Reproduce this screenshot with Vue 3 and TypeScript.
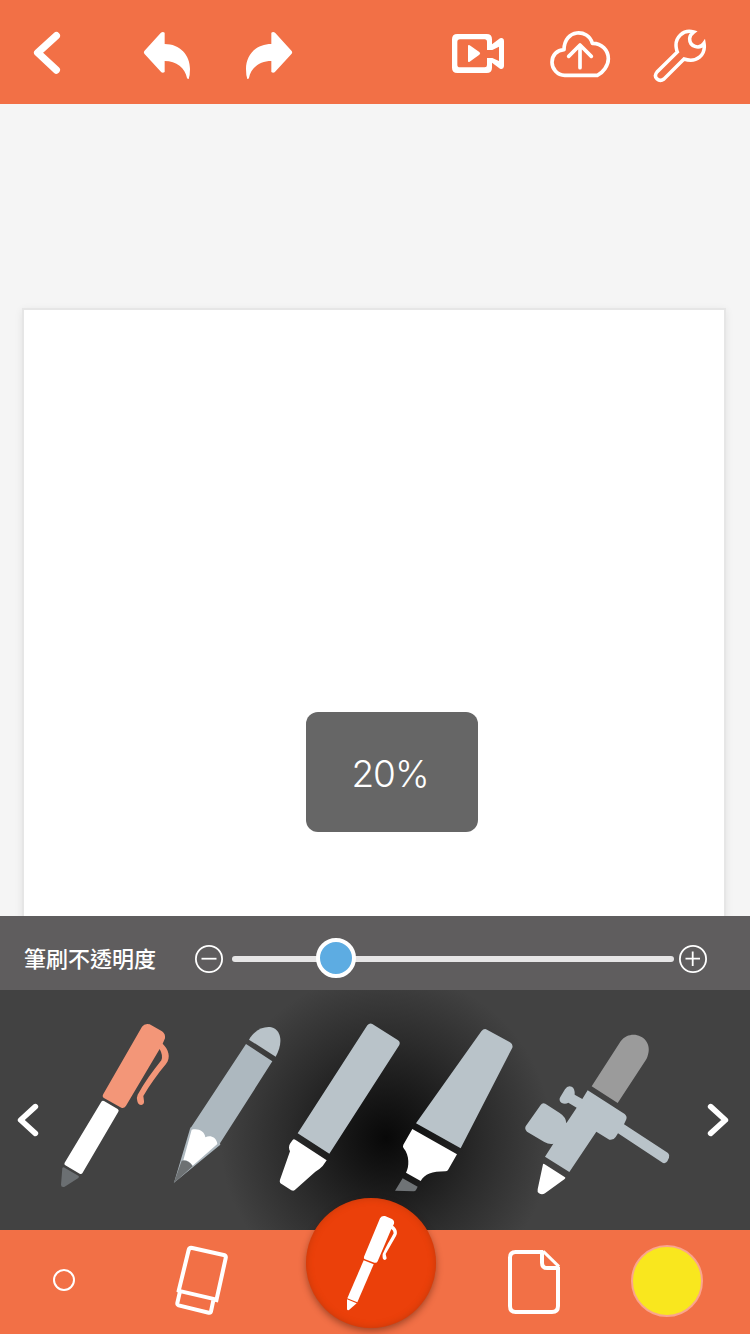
<script setup lang="ts">
import { computed, ref } from 'vue'

const opacity = ref(20)
const thumbLeft = computed(() => `${((opacity.value + 3.53) / 100) * 442}px`)
const brushColor = ref('#f9e71e')
</script>

<template>
  <div class="app">
    <header class="bar top">
      <svg class="icon back" viewBox="90 0 102 312">
        <path d="M169 107L113 158L169 210" fill="none" stroke="#fff" stroke-width="22" stroke-linecap="round" stroke-linejoin="round" />
      </svg>
      <svg class="icon undo" viewBox="420 0 162 312">
        <path d="M433 153L482 99Q488 94 494 98V132C540 132 570 165 570 207Q570 226 566 237Q563 238 561 234C556 204 529 183 494 183V216Q489 220 484 217L433 161Q430 157 433 153Z" fill="#fff" />
      </svg>
      <svg class="icon redo" viewBox="726 0 162 312">
        <path d="M875 153L826 99Q820 94 814 98V132C768 132 738 165 738 207Q738 226 742 237Q745 238 747 234C752 204 779 183 814 183V216Q819 220 824 217L875 161Q878 157 875 153Z" fill="#fff" />
      </svg>
      <svg class="icon video" viewBox="90 0 168 312">
        <path fill-rule="evenodd" fill="#fff" d="M112 102H200Q216 102 216 118V133L240 115Q251 112 252 123V199Q251 209 240 206L216 188V203Q216 219 200 219H112Q96 219 96 203V118Q96 102 112 102ZM120 118Q112 118 112 126V195Q112 202 120 202H194Q201 202 201 195V174H217L237 183V140L217 150H201V126Q201 118 194 118Z" />
        <path d="M144 138Q144 133 149 136L178 156Q183 160 178 164L149 185Q144 188 144 183Z" fill="#fff" />
      </svg>
      <svg class="icon cloud" viewBox="384 0 192 312">
        <g fill="none" stroke="#fff" stroke-width="11" stroke-linejoin="round" stroke-linecap="round">
          <path d="M432 149C433 86 505 85 517 130C544 129 565 150 565 176C565 197 549 218 532 226H434C412 226 396 207 396 187C396 165 411 150 432 149Z" />
          <path d="M480 203V135M446 169L480 135L514 169" />
        </g>
      </svg>
      <svg class="icon wrench" viewBox="696 0 168 312">
        <path d="M821 96C790 87 763 113 769 145Q770 152 772 156L711 216C698 232 717 248 732 237L792 177C830 190 858 165 852 130C838 151 808 139 809 115Q810 104 821 96Z" fill="none" stroke="#fff" stroke-width="10.500" stroke-linejoin="miter" />
      </svg>
    </header>

    <main class="stage">
      <div class="sheet"></div>
      <div class="hud">{{ opacity }}%</div>
    </main>

    <section class="opacity">
      <span class="label">筆刷不透明度</span>
      <svg class="round" viewBox="0 0 28 28">
        <circle cx="14" cy="14" r="13.100" /><path d="M6.500 13.700H21.500" />
      </svg>
      <div class="track"><div class="thumb" :style="{ left: thumbLeft }"></div></div>
      <svg class="round plus" viewBox="0 0 28 28">
        <circle cx="14" cy="14" r="13.100" /><path d="M6.500 13.700H21M13.700 6.500V21" />
      </svg>
    </section>

    <section class="tray">
      <svg class="arrow" viewBox="48 0 72 660">
        <path d="M106 320L62 360L106 400" />
      </svg>
      <svg class="tool pen" viewBox="174 0 342 660">
        <path d="M426 80Q434 69 449 73L486 94Q497 102 495 115L488 131C505 148 514 171 498 192C473 222 450 254 430 288L432 303Q433 313 424 315Q414 315 412 304Q409 292 413 284C434 247 458 213 484 181Q490 167 479 147L379 316Q374 326 364 323L313 295Q305 290 310 282Z" fill="#f39678" />
        <path d="M304 305Q307 301 312 303L353 327Q358 330 355 335L247 520Q244 524 239 521L196 496Q191 493 194 488Z" fill="#fff" />
        <path d="M187 504Q190 500 195 504L235 527Q239 530 235 534L194 560Q183 563 183 554Z" fill="#6b6f72" />
      </svg>
      <svg class="tool pencil" viewBox="36 0 318 660">
        <path d="M267 119C283 92 309 78 334 82C366 90 369 132 347 170Z" fill="#b9c3c9" />
        <path d="M258 132L337 184L180 430L181 434L42 548L91 383L94 381Z" fill="#adb8bf" />
        <path d="M95 389C116 384 134 394 136 412C150 404 167 411 171 427L172 432L98 497Q86 480 70 481Z" fill="#fff" />
        <path d="M65 482Q86 479 98 499L41 550Z" fill="#6d7173" />
      </svg>
      <svg class="tool marker" viewBox="354 0 348 660">
        <path d="M622 76Q629 68 637 72L713 120Q722 125 718 135L508 461L413 400Z" fill="#b9c3c9" />
        <path d="M398 420Q401 415 407 420L500 481L488 498Q480 507 466 515L407 568Q402 575 394 571L366 553Q357 548 360 539L390 454Q384 442 390 431Z" fill="#fff" />
      </svg>
      <svg class="tool highlighter" viewBox="42 0 372 660">
        <path d="M304 94Q312 84 321 89L390 127Q400 133 397 143L242 445L108 370Z" fill="#b9c3c9" />
        <path d="M97 387L231 463L204 510Q202 514 196 514C155 514 135 522 122 543L78 518C88 501 89 466 71 445Q67 440 70 434Z" fill="#fff" />
        <path d="M68 535L113 560L108 570Q106 574 101 574L45 572Z" fill="#6f7376" />
      </svg>
      <svg class="tool airbrush" viewBox="24 0 480 660">
        <path d="M332 124C365 81 435 114 412 171Q410 176 407 181L323 309L245 259Z" fill="#9b9b9b" />
        <path d="M233 271L344 342Q352 349 349 358L342 373L474 459Q480 465 477 473L472 484Q468 491 459 489L324 400L317 411Q311 421 298 419L259 395L178 516L105 470L130 431Q118 434 103 426L51 395Q43 388 47 379L92 315Q97 307 106 311L149 339Q168 351 169 370L200 323L175 308Q165 314 154 308Q145 301 151 291L165 268Q173 255 185 260Q195 264 194 284L217 297Z" fill="#b9c3c9" />
        <path d="M99 493Q100 490 104 493L165 532Q168 534 164 537L105 580Q96 586 87 580Q81 576 83 568Z" fill="#fff" />
      </svg>
      <svg class="arrow next" viewBox="588 0 72 660">
        <path d="M602 320L646 360L602 400" />
      </svg>
    </section>

    <footer class="bar bottom">
      <div class="size"></div>
      <svg class="icon eraser" viewBox="522 30 168 312">
        <g fill="none" stroke="#fff" stroke-width="12">
          <path d="M535 217L566 90Q568 82 577 84L671 105Q679 107 677 115L648 246" />
          <path d="M534 212L650 239" />
          <path d="M540 214L532 249Q531 254 536 256L626 278Q632 279 633 274L640 241" />
        </g>
      </svg>
      <svg class="icon page" viewBox="78 30 168 312">
        <path d="M190 96H107Q90 96 90 113V258Q90 276 107 276H216Q234 276 234 258V140" fill="none" stroke="#fff" stroke-width="12" />
        <path d="M186 93V128Q186 144 202 144H237" fill="none" stroke="#fff" stroke-width="12" />
        <path d="M190 94L237 140" fill="none" stroke="#fff" stroke-width="9" />
      </svg>
      <div class="swatch" :style="{ background: brushColor }"></div>
      <div class="current">
        <svg viewBox="48 24 390 390">
          <g fill="#fff">
            <path d="M270 85Q275 76 285 78L306 87Q314 92 312 101L309 107C320 114 324 128 318 138L287 192L290 205Q289 210 283 210Q276 208 278 192C287 171 301 149 311 130Q311 121 304 117L263 214Q260 220 253 218L225 208Q220 206 222 200Z" />
            <path d="M221 211L251 223L202 337L172 325Z" />
            <path d="M171 328L200 340L177 360Q171 362 171 356Z" />
          </g>
        </svg>
      </div>
    </footer>
  </div>
</template>

<style>
body { margin: 0; }
</style>

<style scoped>
.app {
  width: 750px;
  height: 1334px;
  display: flex;
  flex-direction: column;
  overflow: hidden;
  background: #f5f5f5;
  font-family: "Liberation Sans", "Noto Sans CJK TC", sans-serif;
}
svg { display: block; flex: none; }
.bar {
  height: 104px;
  flex: none;
  display: flex;
  align-items: center;
  box-sizing: border-box;
  background: #f27046;
}
.top { padding-left: 30px; }
.icon { width: 56px; height: 104px; }
.back { width: 34px; }
.undo { width: 54px; margin-left: 76px; }
.redo { width: 54px; margin-left: 48px; }
.video { margin-left: 154px; }
.cloud { width: 64px; margin-left: 42px; }
.wrench { margin-left: 40px; }

.stage {
  position: relative;
  height: 812px;
  flex: none;
  box-sizing: border-box;
  padding: 204px 24px 0 22px;
  overflow: hidden;
}
.sheet {
  height: 640px;
  background: #fff;
  border: 2px solid #e6e6e6;
  box-shadow: 0 2px 8px rgba(0, 0, 0, 0.08);
}
.hud {
  position: absolute;
  left: 306px;
  top: 608px;
  width: 172px;
  height: 120px;
  border-radius: 12px;
  background: #666;
  color: #fff;
  font-family: Inter, "Liberation Sans", sans-serif;
  font-weight: 300;
  font-size: 37px;
  letter-spacing: -1px;
  line-height: 124px;
  text-align: center;
  text-indent: -4px;
}

.opacity {
  height: 74px;
  flex: none;
  display: flex;
  align-items: center;
  box-sizing: border-box;
  padding: 12px 0 0 24px;
  background: #5f5d5e;
}
.label {
  width: 171px;
  margin-bottom: 5px;
  color: #fff;
  font-family: "Noto Sans CJK TC", sans-serif;
  font-weight: 500;
  font-size: 22px;
  line-height: 32px;
  white-space: nowrap;
}
.round {
  width: 28px;
  height: 28px;
  fill: none;
  stroke: #fff;
  stroke-width: 1.8;
}
.track {
  position: relative;
  width: 442px;
  height: 6px;
  margin-left: 9px;
  border-radius: 3px;
  background: #e6e5e6;
}
.thumb {
  position: absolute;
  top: -18px;
  width: 40px;
  height: 40px;
  margin-left: -20px;
  box-sizing: border-box;
  border: 4px solid #fff;
  border-radius: 50%;
  background: #5dace2;
}
.plus { margin-left: 5px; }

.tray {
  height: 240px;
  flex: none;
  display: flex;
  box-sizing: border-box;
  padding: 10px 0 0 16px;
  background: radial-gradient(circle at 386px 148px, #080808 0, #161616 40px, #2b2b2b 97px, #363636 130px, #424242 166px);
}
.arrow { width: 24px; height: 220px; }
.arrow path {
  fill: none;
  stroke: #fff;
  stroke-width: 17;
  stroke-linecap: round;
  stroke-linejoin: round;
}
.next { margin-left: 28px; }
.tool { height: 220px; overflow: visible; }
.pen { width: 114px; margin-left: 18px; }
.pencil { width: 106px; }
.marker { width: 116px; }
.highlighter { width: 124px; }
.airbrush { width: 160px; }

.bottom { position: relative; padding-left: 53px; }
.size {
  width: 22px;
  height: 22px;
  margin-top: -4px;
  box-sizing: border-box;
  border: 2px solid #fff;
  border-radius: 50%;
}
.eraser { margin-left: 99px; }
.page { margin-left: 276px; }
.swatch {
  width: 72px;
  height: 72px;
  margin: -2px 0 0 69px;
  box-sizing: border-box;
  border: 2px solid #faa58d;
  border-radius: 50%;
}
.current {
  position: absolute;
  left: 306px;
  top: -32px;
  width: 130px;
  height: 130px;
  border-radius: 50%;
  background: #eb400a;
  box-shadow: 0 3px 7px rgba(70, 20, 0, 0.45), inset 0 0 7px rgba(140, 45, 10, 0.4);
}
.current svg { width: 130px; height: 130px; }
</style>
